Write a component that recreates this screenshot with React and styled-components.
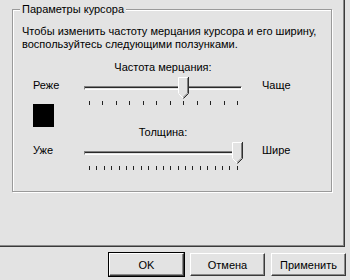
import React from 'react';
import styled, { createGlobalStyle } from 'styled-components';

const GlobalStyle = createGlobalStyle`
  html, body {
    margin: 0;
    padding: 0;
    background: #e3e3e3;
  }
  body {
    font-family: "Liberation Sans", Arial, sans-serif;
    font-size: 11px;
    color: #000;
  }
`;

const Thumb = ({ left }) => (
  <ThumbSvg width="11" height="22" viewBox="0 0 11 22" style={{ left }}>
    <polygon points="0,0 10,0 10,16 5,21 0,16" fill="#e3e3e3" />
    <polyline points="0.5,16 0.5,0.5 9.5,0.5" fill="none" stroke="#fff" />
    <polyline points="0.5,16.5 5,21" fill="none" stroke="#fff" />
    <polyline points="9.5,1 9.5,16.2 5,20.5" fill="none" stroke="#808080" />
    <polyline points="10.5,0 10.5,16.5 5.5,21.5" fill="none" stroke="#303030" />
  </ThumbSvg>
);

const Slider = ({ max, value }) => {
  const span = 148;
  const ticks = Array.from({ length: max + 1 }, (_, i) => i);
  return (
    <SliderBox>
      <Track />
      <Thumb left={5 + (value / max) * span - 5} />
      <Ticks>
        {ticks.map((t) => (
          <Tick key={t} />
        ))}
      </Ticks>
    </SliderBox>
  );
};

const App = () => {
  return (
    <>
      <GlobalStyle />
      <Page>
        <Panel>
          <GroupBox>
            <Legend>Параметры курсора</Legend>
            <Description>
              Чтобы изменить частоту мерцания курсора и его ширину,
              <br />
              воспользуйтесь следующими ползунками.
            </Description>
            <SliderGrid>
              <Caption>Частота мерцания:</Caption>
              <SideLabel>Реже</SideLabel>
              <Slider max={11} value={7} />
              <SideLabel $right>Чаще</SideLabel>
              <CursorSample />
              <Caption $bottom>Толщина:</Caption>
              <SideLabel>Уже</SideLabel>
              <Slider max={20} value={20} />
              <SideLabel $right>Шире</SideLabel>
            </SliderGrid>
          </GroupBox>
        </Panel>
        <ButtonRow>
          <Button $default>OK</Button>
          <Button>Отмена</Button>
          <Button>Применить</Button>
        </ButtonRow>
      </Page>
    </>
  );
};

const Page = styled.div`
  width: 350px;
  height: 280px;
  overflow: hidden;
  display: flex;
  flex-direction: column;
`;

const Panel = styled.div`
  width: 345px;
  height: 247px;
  box-sizing: border-box;
  border-right: 1px solid #3a3a3a;
  border-bottom: 1px solid #3a3a3a;
  box-shadow: inset -1px -1px #8a8a8a;
  padding: 3px 0 0 12px;
`;

const GroupBox = styled.fieldset`
  margin: 0;
  width: 320px;
  height: 189px;
  box-sizing: border-box;
  min-width: 0;
  border: 1px solid #9a9a9a;
  box-shadow: inset 1px 1px #fff, 1px 1px #fff;
  padding: 9px 8px 0 9px;
`;

const Legend = styled.legend`
  padding: 0 2px;
  margin-left: -2px;
  line-height: 13px;
  background: #e3e3e3;
`;

const Description = styled.div`
  line-height: 13px;
  white-space: nowrap;
`;

const SliderGrid = styled.div`
  display: grid;
  grid-template-columns: 51px 158px 1fr;
  grid-template-rows: 13px 32px 33px 32px;
  margin: 10px 0 0 11px;
`;

const Caption = styled.div`
  grid-column: 2;
  text-align: center;
  line-height: 13px;
  align-self: ${(p) => (p.$bottom ? 'end' : 'start')};
`;

const SideLabel = styled.div`
  grid-column: ${(p) => (p.$right ? 3 : 1)};
  line-height: 13px;
  margin-top: 5px;
  padding-left: ${(p) => (p.$right ? '20px' : '0')};
`;

const CursorSample = styled.div`
  grid-column: 1;
  width: 21px;
  height: 23px;
  margin-top: -2px;
  background: #000;
`;

const SliderBox = styled.div`
  grid-column: 2;
  position: relative;
  width: 158px;
  height: 32px;
`;

const Track = styled.div`
  position: absolute;
  left: 0;
  right: 0;
  top: 12px;
  height: 4px;
  box-sizing: border-box;
  border-top: 1px solid #808080;
  border-left: 1px solid #808080;
  border-bottom: 1px solid #fff;
  border-right: 1px solid #fff;
  box-shadow: inset 0 1px #2a2a2a;
`;

const ThumbSvg = styled.svg`
  position: absolute;
  top: 3px;
  display: block;
`;

const Ticks = styled.div`
  position: absolute;
  left: 5px;
  width: 149px;
  top: 27px;
  display: flex;
  justify-content: space-between;
`;

const Tick = styled.span`
  width: 1px;
  height: 4px;
  background: #222;
`;

const ButtonRow = styled.div`
  display: flex;
  justify-content: flex-end;
  gap: 6px;
  padding: 6px 4px 0 0;
`;

const Button = styled.button`
  width: 75px;
  height: 23px;
  box-sizing: border-box;
  padding: 0;
  font-family: "Liberation Sans", Arial, sans-serif;
  font-size: 11px;
  color: #000;
  background: #e3e3e3;
  border: 1px solid;
  border-color: #fff #3a3a3a #3a3a3a #fff;
  box-shadow: inset -1px -1px #8a8a8a;
  outline: ${(p) => (p.$default ? '1px solid #000' : 'none')};
`;

export default App;
